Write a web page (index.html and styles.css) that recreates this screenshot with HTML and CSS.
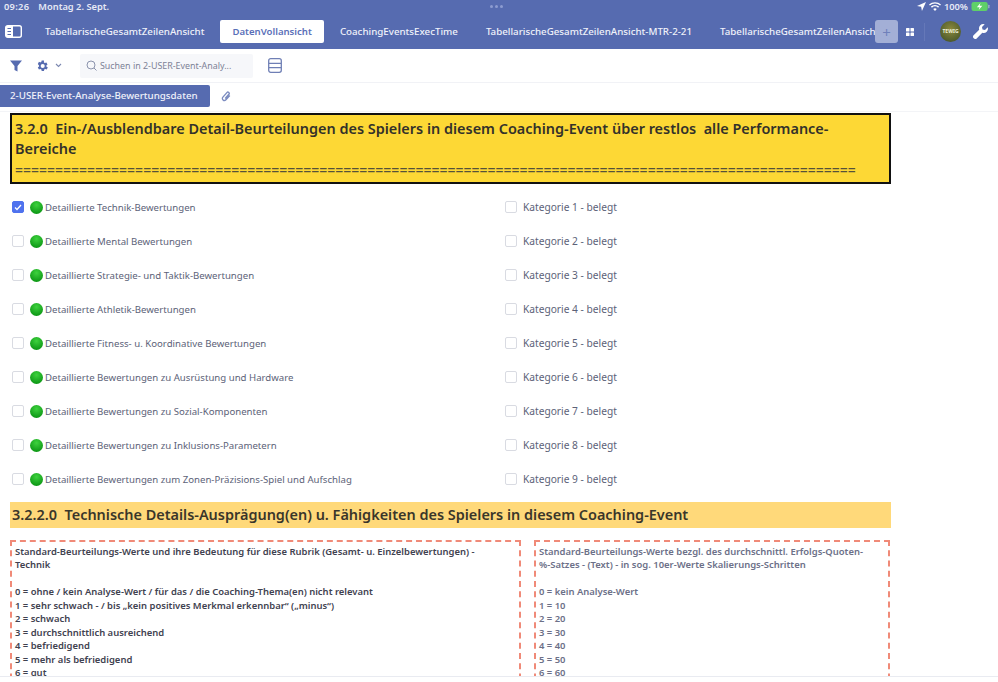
FILE: index.html
```html
<!DOCTYPE html>
<html lang="de">
<head>
    <meta charset="UTF-8">
    <meta name="viewport" content="width=device-width, initial-scale=1.0">
    <title>DatenVollansicht</title>
    <link rel="stylesheet" href="styles.css">
</head>
<body>
    <div class="app">
        <header class="topbar">
            <div class="status">
                <span class="status-time">09:26</span>
                <span class="status-date">Montag 2. Sept.</span>
                <span class="status-dots"><i></i><i></i><i></i></span>
                <span class="status-right">
                    <svg width="9" height="9" viewBox="0 0 10 10"><path d="M10 0 0 4.5l4.6.9.9 4.6z" fill="#fff"/></svg>
                    <svg width="12" height="9" viewBox="0 0 12 9"><path d="M6 9 4.2 7a2.6 2.6 0 0 1 3.6 0zM2.9 5.700l-1-1.100a6 6 0 0 1 8.200 0l-1 1.100a4.500 4.500 0 0 0-6.200 0zM.9 3.500 0 2.500a8.800 8.800 0 0 1 12 0l-.9 1a7.500 7.500 0 0 0-10.200 0z" fill="#fff"/></svg>
                    <span>100%</span>
                    <svg width="19" height="9" viewBox="0 0 20 10"><rect x="0" y="0" width="18" height="10" rx="2.500" fill="#5fd068"/><rect x="18.500" y="3" width="1.500" height="4" rx=".7" fill="#9fb0cc"/><path d="M10 1 6 5.800h3L8 9l4-4.800H9z" fill="#fff"/></svg>
                </span>
            </div>
            <div class="tabrow">
                <svg class="sidebar-icon" width="17" height="13" viewBox="0 0 17 13"><rect x=".7" y=".7" width="15.600" height="11.600" rx="2" fill="none" stroke="#fff" stroke-width="1.400"/><rect x="1" y="1" width="7" height="11" fill="#fff"/><path d="M2.500 3.500h3.500M2.500 6.500h3.500M2.500 9.500h3.500" stroke="#566bb0" stroke-width="1.200"/></svg>
                <nav class="tabs">
                    <a class="tab">TabellarischeGesamtZeilenAnsicht</a>
                    <a class="tab tab-active">DatenVollansicht</a>
                    <a class="tab">CoachingEventsExecTime</a>
                    <a class="tab">TabellarischeGesamtZeilenAnsicht-MTR-2-21</a>
                    <a class="tab">TabellarischeGesamtZeilenAnsicht</a>
                </nav>
                <button class="add-btn">+</button>
                <svg class="grid-icon" width="8" height="8" viewBox="0 0 8 8"><g fill="#fff"><rect width="3.500" height="3.500" rx=".6"/><rect x="4.500" width="3.500" height="3.500" rx=".6"/><rect y="4.500" width="3.500" height="3.500" rx=".6"/><rect x="4.500" y="4.500" width="3.500" height="3.500" rx=".6"/></g></svg>
                <span class="vline"></span>
                <span class="avatar">TEWIG</span>
                <svg class="wrench" width="15" height="15" viewBox="0 0 15 15"><path d="M14.700 3.300 12 6 9.500 5.500 9 3l2.700-2.700A4.300 4.300 0 0 0 6.200 5.700L.6 11.300a2.200 2.200 0 0 0 3.100 3.100l5.600-5.600a4.300 4.300 0 0 0 5.400-5.500z" fill="#fff"/></svg>
            </div>
        </header>

        <div class="toolbar">
            <svg class="tool-filter" width="12" height="12" viewBox="0 0 12 12"><path d="M0 .5h12L7.500 6v5.500l-3-1.500V6z" fill="#566bb0"/></svg>
            <svg class="tool-gear" width="14" height="14" viewBox="0 0 24 24"><path d="M19.400 13c.1-.3.100-.7.100-1s0-.7-.1-1l2.100-1.600-2-3.500-2.500 1a7 7 0 0 0-1.700-1L15.400 2.500h-4l-.4 2.400a7 7 0 0 0-1.700 1l-2.500-1-2 3.500L6.900 11c-.1.300-.1.700-.1 1s0 .7.100 1l-2.100 1.600 2 3.500 2.500-1a7 7 0 0 0 1.700 1l.4 2.400h4l.4-2.400a7 7 0 0 0 1.700-1l2.500 1 2-3.500zM13.200 15.500a3.500 3.500 0 1 1 0-7 3.500 3.500 0 0 1 0 7z" fill="#566bb0"/></svg>
            <svg class="tool-caret" width="7" height="5" viewBox="0 0 7 5"><path d="M1 1l2.500 2.500L6 1" fill="none" stroke="#7c88b0" stroke-width="1.100"/></svg>
            <div class="search">
                <svg width="11" height="11" viewBox="0 0 11 11"><circle cx="5" cy="5" r="4" fill="none" stroke="#8b93ad"/><path d="M8 8l2.500 2.500" stroke="#8b93ad"/></svg>
                <span>Suchen in 2-USER-Event-Analy...</span>
            </div>
            <svg class="tool-rows" width="14" height="15" viewBox="0 0 14 15"><rect x=".7" y=".7" width="12.600" height="13.600" rx="2" fill="none" stroke="#6f7fb5" stroke-width="1.300"/><path d="M1 5.300h12M1 9.700h12" stroke="#6f7fb5" stroke-width="1.300"/></svg>
        </div>

        <div class="sheetbar">
            <span class="sheet-tab">2-USER-Event-Analyse-Bewertungsdaten</span>
            <svg class="clip" width="10" height="12" viewBox="0 0 10 12"><path d="M8.800 5.500 4.900 9.800a2 2 0 0 1-3-2.700l4-4.500a1.300 1.300 0 0 1 2 1.700L4.200 8.500" fill="none" stroke="#7c8cc0" stroke-width="1.400"/></svg>
        </div>

        <main class="content">
            <section class="banner">
                <h2>3.2.0&nbsp; Ein-/Ausblendbare Detail-Beurteilungen des Spielers in diesem Coaching-Event über restlos&nbsp; alle Performance-Bereiche</h2>
                <p>=========================================================================================================</p>
            </section>

            <div class="checks">
                <label class="check"><span class="box box-on"><svg width="8" height="7" viewBox="0 0 8 7"><path d="M1 3.500 3 5.500 7 1" fill="none" stroke="#fff" stroke-width="1.300"/></svg></span><span class="dot"></span>Detaillierte Technik-Bewertungen</label>
                <label class="check check-right"><span class="box"></span>Kategorie 1 - belegt</label>
                <label class="check"><span class="box"></span><span class="dot"></span>Detaillierte Mental Bewertungen</label>
                <label class="check check-right"><span class="box"></span>Kategorie 2 - belegt</label>
                <label class="check"><span class="box"></span><span class="dot"></span>Detaillierte Strategie- und Taktik-Bewertungen</label>
                <label class="check check-right"><span class="box"></span>Kategorie 3 - belegt</label>
                <label class="check"><span class="box"></span><span class="dot"></span>Detaillierte Athletik-Bewertungen</label>
                <label class="check check-right"><span class="box"></span>Kategorie 4 - belegt</label>
                <label class="check"><span class="box"></span><span class="dot"></span>Detaillierte Fitness- u. Koordinative Bewertungen</label>
                <label class="check check-right"><span class="box"></span>Kategorie 5 - belegt</label>
                <label class="check"><span class="box"></span><span class="dot"></span>Detaillierte Bewertungen zu Ausrüstung und Hardware</label>
                <label class="check check-right"><span class="box"></span>Kategorie 6 - belegt</label>
                <label class="check"><span class="box"></span><span class="dot"></span>Detaillierte Bewertungen zu Sozial-Komponenten</label>
                <label class="check check-right"><span class="box"></span>Kategorie 7 - belegt</label>
                <label class="check"><span class="box"></span><span class="dot"></span>Detaillierte Bewertungen zu Inklusions-Parametern</label>
                <label class="check check-right"><span class="box"></span>Kategorie 8 - belegt</label>
                <label class="check"><span class="box"></span><span class="dot"></span>Detaillierte Bewertungen zum Zonen-Präzisions-Spiel und Aufschlag</label>
                <label class="check check-right"><span class="box"></span>Kategorie 9 - belegt</label>
            </div>

            <h3 class="subhead">3.2.2.0&nbsp; Technische Details-Ausprägung(en) u. Fähigkeiten des Spielers in diesem Coaching-Event</h3>

            <div class="legends">
                <div class="legend legend-dark">
                    Standard-Beurteilungs-Werte und ihre Bedeutung für diese Rubrik (Gesamt- u. Einzelbewertungen) - Technik<br><br>
                    0 = ohne / kein Analyse-Wert / für das / die Coaching-Thema(en) nicht relevant<br>
                    1 = sehr schwach - / bis „kein positives Merkmal erkennbar“ („minus“)<br>
                    2 = schwach<br>
                    3 = durchschnittlich ausreichend<br>
                    4 = befriedigend<br>
                    5 = mehr als befriedigend<br>
                    6 = gut
                </div>
                <div class="legend">
                    Standard-Beurteilungs-Werte bezgl. des durchschnittl. Erfolgs-Quoten-%-Satzes - (Text) - in sog. 10er-Werte Skalierungs-Schritten<br><br>
                    0 = kein Analyse-Wert<br>
                    1 = 10<br>
                    2 = 20<br>
                    3 = 30<br>
                    4 = 40<br>
                    5 = 50<br>
                    6 = 60
                </div>
            </div>
        </main>

        <div class="bottom-edge"></div>
    </div>
</body>
</html>
```

FILE: styles.css
```css
* {
    box-sizing: border-box;
}
html, body {
    margin: 0;
    padding: 0;
    height: 100%;
    overflow: hidden;
}
body {
    font-family: "Noto Sans", "Open Sans", sans-serif;
    background-color: #fff;
    color: #5c6278;
}
.app {
    display: flex;
    flex-direction: column;
    height: 682px;
}

/* blue header */
.topbar {
    background-color: #566bb0;
    height: 49px;
    color: #fff;
    flex: none;
}
.status {
    display: flex;
    align-items: center;
    height: 13px;
    padding: 0 8px 0 4px;
    font-size: 9.3px;
    font-weight: 600;
    color: #e6e9f5;
    position: relative;
}
.status-time {
    margin-right: 9px;
    letter-spacing: .3px;
}
.status-dots {
    position: absolute;
    left: 490px;
    top: 5px;
    display: flex;
    gap: 2px;
}
.status-dots i {
    width: 3px;
    height: 3px;
    border-radius: 50%;
    background-color: #8d9cd0;
}
.status-right {
    margin-left: auto;
    display: flex;
    align-items: center;
    gap: 3px;
}
.tabrow {
    display: flex;
    align-items: center;
    height: 36px;
    padding: 7px 10px 6px 5px;
}
.sidebar-icon {
    flex: none;
    margin-right: 11px;
}
.tabs {
    display: flex;
    gap: 4px;
    width: 842px;
    flex: none;
    overflow: hidden;
}
.tab {
    flex: none;
    height: 23px;
    line-height: 23px;
    padding: 0 12px;
    font-size: 9.75px;
    font-weight: 500;
    color: #f0f2fa;
    border-radius: 2px;
}
.tab-active {
    background-color: #fff;
    color: #5a70b8;
    font-size: 9.6px;
    font-weight: 600;
}
.add-btn {
    flex: none;
    width: 23px;
    height: 23px;
    border: none;
    border-radius: 3px;
    padding: 0;
    background-color: #a3afd6;
    color: #6f80ba;
    font-size: 15px;
    line-height: 20px;
    font-family: inherit;
}
.grid-icon {
    flex: none;
    margin-left: 8px;
}
.vline {
    flex: none;
    width: 1px;
    height: 18px;
    margin: 0 15px 0 10px;
    background-color: #6578b8;
}
.avatar {
    flex: none;
    width: 21px;
    height: 21px;
    border-radius: 50%;
    background: radial-gradient(circle at 50% 40%, #8d8a3c, #4d5a2c 75%);
    color: #eef0d8;
    font-size: 5px;
    font-weight: 700;
    line-height: 21px;
    text-align: center;
}
.wrench {
    flex: none;
    margin-left: 12px;
}

/* toolbar */
.toolbar {
    flex: none;
    display: flex;
    align-items: center;
    height: 34px;
    padding: 0 0 0 10px;
    border-bottom: 1px solid #f1f2f6;
}
.tool-filter {
    margin-right: 13px;
}
.tool-gear {
    margin-right: 6px;
}
.tool-caret {
    margin-right: 18px;
}
.search {
    display: flex;
    align-items: center;
    gap: 3px;
    width: 173px;
    height: 24px;
    padding-left: 6px;
    background-color: #f6f7fa;
    border-radius: 2px;
    font-size: 8.9px;
    color: #7d8296;
}
.tool-rows {
    margin-left: 15px;
}

/* sheet tabs */
.sheetbar {
    flex: none;
    display: flex;
    align-items: center;
    height: 29px;
    border-bottom: 1px solid #f3f4f7;
    padding-bottom: 2px;
}
.sheet-tab {
    width: 210px;
    height: 22px;
    line-height: 21px;
    padding-left: 10px;
    background-color: #566bb0;
    color: #f0f2fa;
    font-size: 9.75px;
    font-weight: 500;
    border-radius: 0 2px 2px 0;
}
.clip {
    margin-left: 11px;
}

/* content */
.content {
    flex: 1;
    overflow: hidden;
    padding: 1px 107px 0 10px;
}
.banner {
    height: 71px;
    background-color: #fdd835;
    border: 2px solid #111;
    padding: 4px 12px 0 3px;
    color: #33312a;
    overflow: hidden;
}
.banner h2 {
    margin: 0;
    font-size: 14.45px;
    font-weight: 600;
    line-height: 20px;
}
.banner p {
    margin: 0;
    font-size: 14px;
    line-height: 21px;
    white-space: nowrap;
    color: #55523a;
    font-weight: 500;
}
.checks {
    display: grid;
    grid-template-columns: 493px 1fr;
    grid-auto-rows: 34px;
    margin-top: 6px;
}
.check {
    display: flex;
    align-items: center;
    padding-left: 2px;
    font-size: 9.63px;
    color: #5c6278;
}
.check-right {
    font-size: 10.2px;
}
.box {
    width: 12px;
    height: 12px;
    flex: none;
    margin-right: 6px;
    border: 1px solid #d9dbe2;
    border-radius: 2px;
    background-color: #fff;
    display: flex;
    align-items: center;
    justify-content: center;
}
.box-on {
    background-color: #4f72ee;
    border-color: #4f72ee;
}
.dot {
    width: 13px;
    height: 13px;
    flex: none;
    margin-right: 2px;
    border-radius: 50%;
    background: radial-gradient(circle at 50% 30%, #3ed23e, #0f9a17 75%);
}
.subhead {
    margin: 6px 0 0;
    height: 26px;
    line-height: 26px;
    padding-left: 2px;
    background-color: #ffd97a;
    color: #3a362a;
    font-size: 14.45px;
    font-weight: 600;
}
.legends {
    display: flex;
    gap: 13px;
    margin-top: 12px;
}
.legend {
    flex: none;
    width: 356px;
    height: 160px;
    border: 2px dashed #f08a78;
    padding: 3px 14px 0 3px;
    font-size: 9.45px;
    font-weight: 600;
    line-height: 13.45px;
    color: #6c7088;
}
.legend-dark {
    width: 511px;
    padding-right: 34px;
    color: #3f4250;
}
.bottom-edge {
    flex: none;
    height: 6px;
    background-color: #fff;
    border-top: 1px solid #e9ebf1;
}
```
